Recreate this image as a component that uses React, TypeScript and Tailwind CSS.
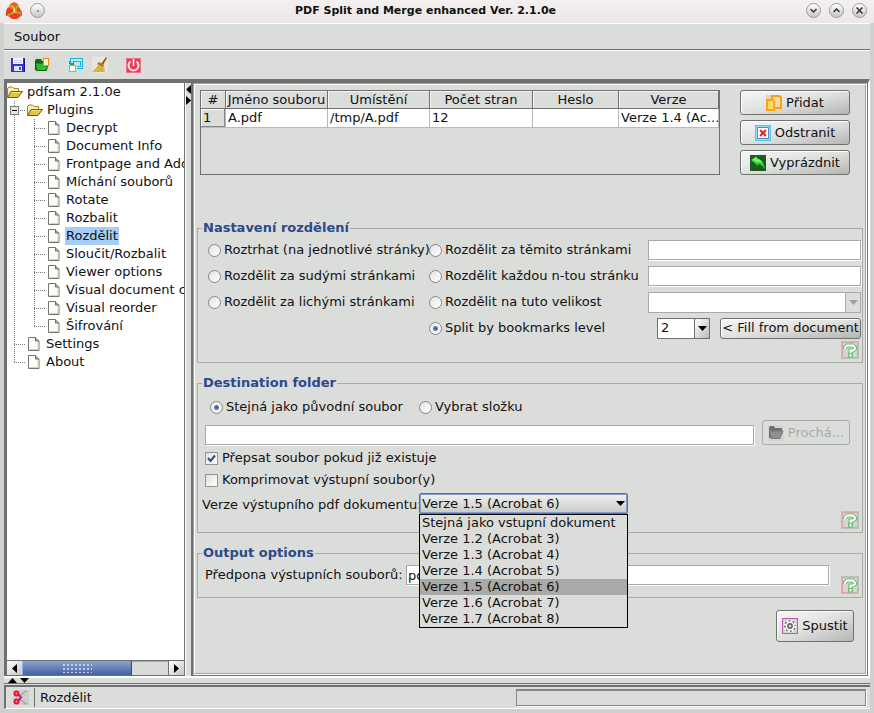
import { useState } from 'react';
import type { ReactNode } from 'react';

const plugins = [
  'Decrypt',
  'Document Info',
  'Frontpage and Addendum',
  'Míchání souborů',
  'Rotate',
  'Rozbalit',
  'Rozdělit',
  'Sloučit/Rozbalit',
  'Viewer options',
  'Visual document composer',
  'Visual reorder',
  'Šifrování',
];

const versions = [
  'Stejná jako vstupní dokument',
  'Verze 1.2 (Acrobat 3)',
  'Verze 1.3 (Acrobat 4)',
  'Verze 1.4 (Acrobat 5)',
  'Verze 1.5 (Acrobat 6)',
  'Verze 1.6 (Acrobat 7)',
  'Verze 1.7 (Acrobat 8)',
];

/* ---------- icons ---------- */

function LogoIcon() {
  return (
    <svg width="16" height="17" viewBox="0 0 16 17" className="shrink-0">
      <path d="M4 2l4-2 4 2 1 4-3 2-3-1-4-2z" fill="#ee5a1c" />
      <path d="M2 5l5 2v3l-3 3-4 1-0-5z" fill="#e8401c" />
      <path d="M2 14l5-4 6 2 2 2-4 3H6z" fill="#e8401c" />
      <path d="M13 5l3 5v4l-5-2-2-3z" fill="#ee4c1c" />
      <path d="M4 3l4 2 .5 3-1.500 3-5 2M8.500 8.500l3 2 4 1M12 3l-3 5" stroke="#a6b52c" strokeWidth="1.600" fill="none" />
      <path d="M5 4l3 2 .5 3-1.500 2" stroke="#e4e8a0" strokeWidth=".8" fill="none" />
    </svg>
  );
}

function SaveIcon() {
  return (
    <svg width="15" height="16" viewBox="0 0 15 16" shapeRendering="crispEdges">
      <path d="M0 1h13l1 1v13H0z" fill="#3a2fd0" />
      <path d="M2 1h10v6H2z" fill="#f4f6ff" />
      <path d="M3 3h8v1H3zM3 5h8v1H3z" fill="#c8ccee" />
      <path d="M3 9h8v5H3z" fill="#dfe8f6" />
      <path d="M8 10h2v3H8z" fill="#2a5fc0" />
      <path d="M13 2h1v13h-1z" fill="#1c149a" />
    </svg>
  );
}

function OpenIcon() {
  return (
    <svg width="16" height="16" viewBox="0 0 16 16">
      <rect width="16" height="16" fill="#cfdccb" />
      <path d="M1 4l1-2h5l1 2h6v3H4l-2 6H1z" fill="#0c6a10" />
      <path d="M1.500 5l1 8.500h10L14 6H3z" fill="#2fbc2a" stroke="#0b5f0e" />
      <rect x="9.500" y="1.500" width="5" height="7" fill="#fff0cc" stroke="#f08a1c" />
    </svg>
  );
}

function RestoreIcon() {
  return (
    <svg width="16" height="16" viewBox="0 0 16 16" shapeRendering="crispEdges">
      <rect width="16" height="16" fill="#c3e6ea" />
      <path d="M2 5V1.500h12.500v10H9" fill="none" stroke="#1fb2dc" />
      <path d="M5 6V4.500h7v5H9" fill="none" stroke="#1fb2dc" />
      <path d="M1 4h1v1h1v1h2V4h1v4H2V7H1z" fill="#1d9c8c" />
      <rect x="1.500" y="8.500" width="6" height="6" fill="#fff6d8" stroke="#e89b2c" />
    </svg>
  );
}

function BroomIcon() {
  return (
    <svg width="16" height="16" viewBox="0 0 16 16">
      <rect width="16" height="16" fill="#e9e5da" />
      <path d="M14 0l1 1-4 7-2-1z" fill="#8a5a14" />
      <path d="M7 6l5 3 1 6H0l5-5z" fill="#dcbd4c" />
      <path d="M7 5l5 3-1 2-6-3z" fill="#a87a16" />
      <path d="M3 14l4-5M6 15l3-5M10 15V11" stroke="#a98a24" strokeDasharray="1 1" />
    </svg>
  );
}

function PowerIcon() {
  return (
    <svg width="15" height="15" viewBox="0 0 15 15">
      <rect width="15" height="15" fill="#ee3b55" />
      <rect x=".5" y=".5" width="14" height="14" fill="none" stroke="#f0708a" />
      <path d="M4.500 3.500a5 5 0 1 0 6 0" fill="none" stroke="#fbe3e6" strokeWidth="2" />
      <path d="M7.500 1v7" stroke="#fff" strokeWidth="1.500" />
    </svg>
  );
}

function FolderIcon() {
  return (
    <svg width="16" height="13" viewBox="0 0 16 13" className="shrink-0">
      <path d="M.5 11.500V2.500L2 1h3.500L7 2.500h4.500V5" fill="#f6efb0" stroke="#a08a1e" />
      <path d="M.5 11.500L4 5.500h11.500L11 11.500z" fill="#e3c243" stroke="#6f5c0c" />
      <path d="M4.500 6.500h9" stroke="#f8e680" />
    </svg>
  );
}

function FileIcon() {
  return (
    <svg width="12" height="14" viewBox="0 0 12 14" className="shrink-0">
      <path d="M.5.5h7l3.500 3.500v9.500H.5z" fill="#fdfdfb" stroke="#76766f" />
      <path d="M7.500.5v3.500H11" fill="#b9b9b2" stroke="#6c6c66" />
      <path d="M10 5v7.500H1.500" fill="none" stroke="#d2d2ca" />
    </svg>
  );
}

function AddIcon() {
  return (
    <svg width="16" height="16" viewBox="0 0 16 16" shapeRendering="crispEdges">
      <rect width="16" height="16" fill="#edcfae" />
      <path d="M6 1h7l2 2v10H6z" fill="#fbd9a4" stroke="#fb9f14" strokeWidth="2" />
      <path d="M1 5h6l1 2v8H1z" fill="#ffe08a" stroke="#fba414" strokeWidth="2" />
      <path d="M2 6h4v8H2z" fill="#f7dc58" />
    </svg>
  );
}

function RemoveIcon() {
  return (
    <svg width="16" height="16" viewBox="0 0 16 16">
      <rect width="16" height="16" fill="#55c8ee" />
      <rect x="1.500" y="1.500" width="13" height="13" fill="#dff2fa" />
      <rect x="2.500" y="2.500" width="11" height="11" fill="#fff" stroke="#5c88b4" />
      <path d="M5 5l6 6M11 5l-6 6" stroke="#e8221c" strokeWidth="2" />
    </svg>
  );
}

function ClearIcon() {
  return (
    <svg width="16" height="16" viewBox="0 0 16 16">
      <rect width="16" height="16" fill="#1c5a22" />
      <path d="M1 5l6-4v2c4 1 7 5 8 11-3-4-5-5-7-5v2z" fill="#2fd436" />
      <path d="M2 5l4-3 1 2c3 0 4 2 6 4-2-1-4-1-6-1z" fill="#7af07a" />
    </svg>
  );
}

function BrowseIcon() {
  return (
    <svg width="16" height="16" viewBox="0 0 16 16" className="shrink-0">
      <rect width="16" height="16" fill="#d3d5d3" />
      <path d="M1 3l1-2h4l1 2h7v3H4l-1 7H1z" fill="#6f716f" />
      <path d="M1.500 5l1.500 8.500h9L15 6H4z" fill="#8e908e" stroke="#767876" />
    </svg>
  );
}

function GearIcon() {
  return (
    <svg width="16" height="16" viewBox="0 0 16 16">
      <rect x=".5" y=".5" width="15" height="15" fill="#d9cfd6" stroke="#c05aa8" />
      <circle cx="8" cy="8" r="5.800" fill="#5c5c5a" />
      <circle cx="8" cy="8" r="5.300" fill="none" stroke="#fff" strokeWidth="2" strokeDasharray="2.100 2.060" />
      <circle cx="8" cy="8" r="4.500" fill="#fff" />
      <circle cx="8" cy="8" r="2.200" fill="#d0d0ce" stroke="#5c5c5a" strokeWidth="1.400" />
    </svg>
  );
}

function ScissorsIcon() {
  return (
    <svg width="16" height="15" viewBox="0 0 16 15" className="shrink-0">
      <rect width="16" height="15" fill="#cfcfcc" />
      <path d="M7 7l7-6M7 8l7 6" stroke="#a4a6a4" strokeWidth="3" />
      <path d="M8 7l6-5M8 8l6 5" stroke="#f4f4f2" />
      <path d="M5 4l3 3.500L5 11" fill="none" stroke="#c81890" strokeWidth="2" />
      <circle cx="3.500" cy="3.500" r="2" fill="#ffa070" stroke="#ee1038" strokeWidth="2" />
      <circle cx="3.500" cy="11.500" r="2" fill="#ffa070" stroke="#ee1038" strokeWidth="2" />
    </svg>
  );
}

function HelpIcon() {
  return (
    <svg width="18" height="18" viewBox="0 0 18 18">
      <rect width="18" height="18" fill="#bfbfbc" />
      <rect x="1.500" y="1.500" width="15" height="15" fill="#d3d6d3" stroke="#e0a4a8" />
      <path d="M4 8V6.500l2-2h6l2 2v1.500l-2 1.500H9.500V12" fill="none" stroke="#66c274" strokeWidth="4" />
      <rect x="7" y="11.500" width="5" height="5" fill="#66c274" />
      <path d="M4 8V6.500l2-2h6l2 2v1.500l-2 1.500H9.500V12" fill="none" stroke="#fff" strokeWidth="1.800" />
      <rect x="8.500" y="13" width="2" height="2.500" fill="#fff" />
    </svg>
  );
}

/* ---------- tree ---------- */

type BranchProps = { kind: 'line' | 'tee' | 'end' | 'box' };

// One 20px cell of dotted connector in front of a tree node
function Branch({ kind }: BranchProps) {
  return (
    <svg width="20" height="18" viewBox="0 0 20 18" className="shrink-0" shapeRendering="crispEdges">
      <path d={kind === 'end' ? 'M7.500 0v9' : 'M7.500 0v18'} stroke="#7d7f7d" strokeDasharray="1 1" />
      {kind !== 'line' && <path d="M7 9.500h12" stroke="#7d7f7d" strokeDasharray="1 1" />}
      {kind === 'box' && (
        <>
          <rect x="3.500" y="5.500" width="8" height="8" fill="#e4e6e4" stroke="#7d7f7d" />
          <path d="M5 9.500h5" stroke="#000" />
        </>
      )}
    </svg>
  );
}

function TreeLabel({ text, selected }: { text: string; selected?: boolean }) {
  return (
    <span className={selected ? 'h-[18px] bg-[#a5cdf7] px-px whitespace-nowrap' : 'px-px whitespace-nowrap'}>
      {text}
    </span>
  );
}

function PluginTree() {
  return (
    <ul className="flex-1 overflow-hidden bg-white leading-[18px]">
      <li className="flex h-[18px] items-center gap-[3px]">
        <FolderIcon />
        <TreeLabel text="pdfsam 2.1.0e" />
      </li>
      <li className="flex h-[18px] items-center">
        <Branch kind="box" />
        <span className="flex items-center gap-[3px]">
          <FolderIcon />
          <TreeLabel text="Plugins" />
        </span>
      </li>
      {plugins.map((name, i) => (
        <li key={name} className="flex h-[18px] items-center">
          <Branch kind="line" />
          <Branch kind={i === plugins.length - 1 ? 'end' : 'tee'} />
          <span className="flex items-center gap-[5px] pl-px">
            <FileIcon />
            <TreeLabel text={name} selected={name === 'Rozdělit'} />
          </span>
        </li>
      ))}
      {['Settings', 'About'].map((name) => (
        <li key={name} className="flex h-[18px] items-center">
          <Branch kind={name === 'About' ? 'end' : 'tee'} />
          <span className="flex items-center gap-[5px] pl-px">
            <FileIcon />
            <TreeLabel text={name} />
          </span>
        </li>
      ))}
    </ul>
  );
}

function ScrollBar() {
  return (
    <div className="flex h-[15px] border-t border-[#6f716f] bg-[#d9dbd9]">
      <button aria-label="◀" className="flex w-[15px] items-center justify-center bg-linear-to-br from-white to-[#c4c6c4]">
        <svg width="5" height="9" viewBox="0 0 5 9"><path d="M5 0v9L0 4.500z" fill="#000" /></svg>
      </button>
      <div className="flex w-[110px] items-center justify-center border-x border-[#2b4a86] border-l-[#8fb4ee] bg-linear-to-b from-[#8ba4d2] to-[#44629c]">
        <div className="h-[10px] w-[30px] bg-[radial-gradient(#b9d0f4_1px,transparent_1px)] bg-size-[4px_4px]" />
      </div>
      <div className="flex-1 border-t border-[#a8aaa8]" />
      <button aria-label="▶" className="flex w-[16px] items-center justify-center border-l border-[#6f716f] bg-linear-to-br from-white to-[#c4c6c4]">
        <svg width="5" height="9" viewBox="0 0 5 9"><path d="M0 0v9l5-4.500z" fill="#000" /></svg>
      </button>
    </div>
  );
}

/* ---------- controls ---------- */

type ButtonProps = { children: ReactNode; className: string; disabled?: boolean };

function Button({ children, className, disabled }: ButtonProps) {
  return (
    <button
      disabled={disabled}
      className={
        'flex items-center justify-center gap-1 rounded-[3px] border whitespace-nowrap ' +
        (disabled
          ? 'border-[#a8aaa8] text-[#a8aaa8] '
          : 'border-[#6f716f] bg-linear-to-br from-[#f6f7f6] via-[#dfe1df] to-[#b4b6b4] shadow-[inset_1px_1px_0_#fff] ') +
        className
      }
    >
      {children}
    </button>
  );
}

type RadioProps = { id: string; name: string; label: string; checked?: boolean };

function Radio({ id, name, label, checked }: RadioProps) {
  return (
    <label htmlFor={id} id={id + '-label'} className="flex items-center gap-[3px] whitespace-nowrap">
      <input
        type="radio"
        id={id}
        name={name}
        defaultChecked={checked}
        className="size-[13px] shrink-0 appearance-none rounded-full border border-[#858785] bg-linear-to-br from-[#e2e4e2] to-white checked:bg-[radial-gradient(circle,#33508f_0,#6480b8_2px,#f0f2f0_3px)]"
      />
      {label}
    </label>
  );
}

type CheckProps = { id: string; label: string; checked?: boolean };

function Check({ id, label, checked }: CheckProps) {
  return (
    <label htmlFor={id} className="flex h-[22px] items-center gap-1">
      <span className="relative flex">
        <input
          type="checkbox"
          id={id}
          defaultChecked={checked}
          className="peer size-[13px] appearance-none border border-[#939593] bg-linear-to-br from-[#dfe1df] to-white"
        />
        <svg width="13" height="13" viewBox="0 0 13 13" className="pointer-events-none absolute inset-0 hidden peer-checked:block">
          <path d="M3 6l2.500 3L10 3.500" fill="none" stroke="#2f4c8c" strokeWidth="2" />
        </svg>
      </span>
      {label}
    </label>
  );
}

const fieldClass = 'h-5 min-w-0 border border-[#a8aaa8] bg-white px-px shadow-[1px_1px_0_#fff] outline-none';

function Arrow({ color }: { color: string }) {
  return (
    <svg width="9" height="5" viewBox="0 0 9 5">
      <path d="M0 0h9L4.500 5z" fill={color} />
    </svg>
  );
}

function Group({ title, children, className }: { title: string; children: ReactNode; className: string }) {
  return (
    <fieldset className={'mx-[2px] min-w-0 border border-[#a8aaa8] pb-[3px] ' + className}>
      <legend className="ml-1 px-px leading-4 font-bold text-[#2c4a8a]">{title}</legend>
      {children}
    </fieldset>
  );
}

function HelpButton({ className }: { className: string }) {
  return (
    <button aria-label="?" className={'mr-[3px] shrink-0 ' + className}>
      <HelpIcon />
    </button>
  );
}

function WindowButton({ children, label }: { children?: ReactNode; label: string }) {
  return (
    <button
      aria-label={label}
      className="flex size-[15px] shrink-0 items-center justify-center rounded-full border border-[#9b9b99] bg-linear-to-b from-white to-[#c6c6c4]"
    >
      {children}
    </button>
  );
}

/* ---------- main panel ---------- */

function FileTable() {
  const th = 'h-[18px] overflow-hidden border-r border-b border-[#6f716f] p-0 font-normal whitespace-nowrap shadow-[inset_1px_1px_0_#f4f5f4]';
  const td = 'h-[19px] overflow-hidden border-r border-b border-[#b9bbb9] px-[2px] py-0 whitespace-nowrap';
  return (
    <div className="h-[85px] min-w-0 flex-1 border border-[#6f716f]">
      <table className="w-full table-fixed border-separate border-spacing-0 leading-4">
        <thead>
          <tr>
            <th className={th + ' w-[25px]'}>#</th>
            <th className={th}>Jméno souboru</th>
            <th className={th}>Umístění</th>
            <th className={th + ' w-[103px]'}>Počet stran</th>
            <th className={th + ' w-[86px]'}>Heslo</th>
            <th className={th + ' w-[100px]'}>Verze</th>
          </tr>
        </thead>
        <tbody>
          <tr className="bg-white">
            <td className={td + ' bg-[#dbdddb] shadow-[inset_-1px_-1px_0_#858785,inset_1px_1px_0_#fff]'}>1</td>
            <td className={td}>A.pdf</td>
            <td className={td}>/tmp/A.pdf</td>
            <td className={td}>12</td>
            <td className={td}></td>
            <td className={td}>Verze 1.4 (Ac...</td>
          </tr>
        </tbody>
      </table>
    </div>
  );
}

function SplitSettings() {
  return (
    <Group title="Nastavení rozdělení" className="mt-[45px]">
      <div className="mt-px grid auto-rows-[26px] grid-cols-[221px_219px_1fr] items-center pr-px pl-[10px]">
        <Radio id="burst" name="split" label="Roztrhat (na jednotlivé stránky)" />
        <Radio id="after" name="split" label="Rozdělit za těmito stránkami" />
        <input type="text" aria-labelledby="after-label" className={fieldClass} />

        <Radio id="even" name="split" label="Rozdělit za sudými stránkami" />
        <Radio id="every" name="split" label="Rozdělit každou n-tou stránku" />
        <input type="text" aria-labelledby="every-label" className={fieldClass} />

        <Radio id="odd" name="split" label="Rozdělit za lichými stránkami" />
        <Radio id="size" name="split" label="Rozdělit na tuto velikost" />
        <div className="relative flex">
          <select disabled aria-labelledby="size-label" className="h-[21px] w-full appearance-none border border-[#a8aaa8] bg-white" />
          <span className="pointer-events-none absolute inset-y-0 right-0 flex w-4 items-center justify-center rounded-[2px] border border-[#a8aaa8] bg-[#dbdddb]">
            <Arrow color="#a0a2a0" />
          </span>
        </div>

        <span />
        <Radio id="level" name="split" label="Split by bookmarks level" checked />
        <div className="flex justify-end gap-[10px]">
          <div className="relative flex">
            <select aria-labelledby="level-label" className="h-[21px] w-[53px] appearance-none border border-[#6f716f] bg-white pl-[3px]">
              <option>2</option>
            </select>
            <span className="pointer-events-none absolute inset-y-0 right-0 flex w-4 items-center justify-center rounded-[2px] border border-[#6f716f] bg-linear-to-br from-white to-[#b9bbb9]">
              <Arrow color="#000" />
            </span>
          </div>
          <Button className="h-[21px] w-[141px]">&lt; Fill from document</Button>
        </div>
      </div>
      <div className="flex justify-end">
        <HelpButton className="" />
      </div>
    </Group>
  );
}

function VersionSelect() {
  const [version, setVersion] = useState(versions[4]);

  return (
    <div className="relative w-[209px] shrink-0">
      <select
        id="version"
        value={version}
        onChange={(e) => setVersion(e.target.value)}
        className="h-[21px] w-full appearance-none rounded-[2px] border border-[#6f716f] bg-linear-to-b from-[#f0f2f0] to-[#c9cbc9] pl-[2px] shadow-[inset_0_0_0_1px_#7f9ccc] outline-none"
      >
        {versions.map((v) => (
          <option key={v}>{v}</option>
        ))}
      </select>
      <span className="pointer-events-none absolute top-2 right-[3px]">
        <Arrow color="#000" />
      </span>
      <ul role="listbox" className="absolute top-[21px] left-0 z-10 w-full border border-black bg-[#dbdddb] leading-4">
        {versions.map((v) => (
          <li
            key={v}
            role="option"
            aria-selected={v === version}
            onClick={() => setVersion(v)}
            className={v === version ? 'bg-[#a8aaa8] pl-[2px]' : 'pl-[2px]'}
          >
            {v}
          </li>
        ))}
      </ul>
    </div>
  );
}

function Destination() {
  return (
    <Group title="Destination folder" className="mt-3">
      <div className="mt-[3px] flex h-[26px] items-center pl-3">
        <div className="w-[209px]">
          <Radio id="same" name="dest" label="Stejná jako původní soubor" checked />
        </div>
        <Radio id="choose" name="dest" label="Vybrat složku" />
      </div>
      <div className="flex items-end gap-2 pr-3 pl-[7px]">
        <input type="text" aria-labelledby="choose-label" className={fieldClass + ' flex-1'} />
        <Button disabled className="h-[25px] w-[88px]">
          <BrowseIcon />
          Prochá...
        </Button>
      </div>
      <div className="mt-[2px] pl-[7px]">
        <Check id="overwrite" label="Přepsat soubor pokud již existuje" checked />
        <Check id="compress" label="Komprimovat výstupní soubor(y)" />
      </div>
      <div className="mt-[2px] flex h-9 items-start pl-1">
        <label htmlFor="version" className="w-[217px] shrink-0 leading-6 whitespace-nowrap">
          Verze výstupního pdf dokumentu:
        </label>
        <VersionSelect />
        <HelpButton className="ml-auto self-end" />
      </div>
    </Group>
  );
}

function OutputOptions() {
  return (
    <Group title="Output options" className="mt-3">
      <div className="flex items-start pt-1 pl-[7px]">
        <label htmlFor="prefix" className="w-[201px] shrink-0 leading-5">
          Předpona výstupních souborů:
        </label>
        <input type="text" id="prefix" defaultValue="pdfsam_" className={fieldClass + ' mr-3 flex-1'} />
        <HelpButton className="mt-[11px]" />
      </div>
    </Group>
  );
}

export default function App() {
  return (
    <div className="flex min-h-screen flex-col bg-[#dbdddb] font-['DejaVu_Sans',sans-serif] text-[13px] leading-4 text-[#111]">
      <header className="flex h-[23px] items-center gap-2 bg-linear-to-b from-[#f3f0ef] to-[#ebe8e7] pr-[7px] pb-[2px] pl-[6px]">
        <LogoIcon />
        <WindowButton label="•">
          <span className="size-[2px] rounded-full bg-[#777]" />
        </WindowButton>
        <h1 className="flex-1 text-center text-[11px] font-bold">PDF Split and Merge enhanced Ver. 2.1.0e</h1>
        <WindowButton label="⌄">
          <svg width="7" height="5" viewBox="0 0 7 5"><path d="M.5 1l3 3 3-3" fill="none" stroke="#333" strokeWidth="1.500" /></svg>
        </WindowButton>
        <WindowButton label="⌃">
          <svg width="7" height="5" viewBox="0 0 7 5"><path d="M.5 4l3-3 3 3" fill="none" stroke="#333" strokeWidth="1.500" /></svg>
        </WindowButton>
        <WindowButton label="×">
          <svg width="7" height="7" viewBox="0 0 7 7"><path d="M.5.5l6 6M6.500.5l-6 6" stroke="#333" strokeWidth="1.500" /></svg>
        </WindowButton>
      </header>

      <div className="flex flex-1 flex-col border-x-4 border-b-4 border-[#cfd1cf]">
        <nav className="flex h-[27px] items-center border-t border-b border-t-white border-b-[#6f716f] pl-[10px]">
          <button>Soubor</button>
        </nav>

        <div className="flex h-[29px] items-center border-t border-white pl-[7px]">
          <button aria-label="Save"><SaveIcon /></button>
          <button aria-label="Open" className="ml-2"><OpenIcon /></button>
          <button aria-label="Restore" className="ml-[18px]"><RestoreIcon /></button>
          <button aria-label="Clear" className="ml-2"><BroomIcon /></button>
          <button aria-label="Exit" className="ml-[18px]"><PowerIcon /></button>
        </div>

        <div className="flex flex-1 border-t-4 border-r-2 border-b-2 border-white border-t-[#6f716f]">
          <aside className="flex w-[182px] shrink-0 flex-col border-r border-white">
            <div className="flex flex-1 flex-col border-r border-b border-l-[3px] border-[#6f716f]">
              <PluginTree />
              <ScrollBar />
            </div>
          </aside>

          <div className="flex w-[5px] shrink-0 flex-col items-center gap-[2px] pt-[2px]">
            <svg width="5" height="9" viewBox="0 0 5 9"><path d="M5 0v9L0 4.500z" fill="#000" /></svg>
            <svg width="5" height="9" viewBox="0 0 5 9"><path d="M0 0v9l5-4.500z" fill="#000" /></svg>
          </div>

          <main className="flex min-w-0 flex-1 border-r border-b border-l-2 border-[#6f716f]">
            <div className="flex min-w-0 flex-1 border border-white border-t-[#a0a2a0] border-l-[#a0a2a0]">
              <div className="min-w-0 flex-1 border border-[#a0a2a0] border-t-white border-l-white">
                <div className="flex gap-5 pt-[5px] pr-[15px] pl-[5px]">
                  <FileTable />
                  <div className="flex flex-col gap-[5px]">
                    <Button className="h-[25px] w-[110px]"><AddIcon />Přidat</Button>
                    <Button className="h-[25px] w-[110px]"><RemoveIcon />Odstranit</Button>
                    <Button className="h-[25px] w-[110px]"><ClearIcon />Vyprázdnit</Button>
                  </div>
                </div>
                <SplitSettings />
                <Destination />
                <OutputOptions />
                <div className="mt-3 flex justify-end pr-[11px]">
                  <Button className="h-8 w-[78px]"><GearIcon />Spustit</Button>
                </div>
              </div>
            </div>
          </main>
        </div>

        <div className="flex h-[6px] items-center gap-[3px] border-b border-[#6f716f] pl-1">
          <svg width="9" height="5" viewBox="0 0 9 5"><path d="M0 5h9L4.500 0z" fill="#000" /></svg>
          <Arrow color="#000" />
        </div>

        <footer className="mt-px flex h-6 items-stretch border-t-2 border-b border-l-2 border-[#6f716f] border-b-white pr-1">
          <div className="flex items-center pr-[5px] pl-[7px]">
            <ScissorsIcon />
          </div>
          <div className="my-px border-l border-[#6f716f] shadow-[inset_1px_0_0_#fff]" />
          <div className="flex flex-1 items-center pl-[5px]">Rozdělit</div>
          <div
            role="progressbar"
            className="my-[2px] w-[350px] border border-[#858785] border-t-2 shadow-[1px_1px_0_#fff]"
          />
        </footer>
      </div>
    </div>
  );
}
